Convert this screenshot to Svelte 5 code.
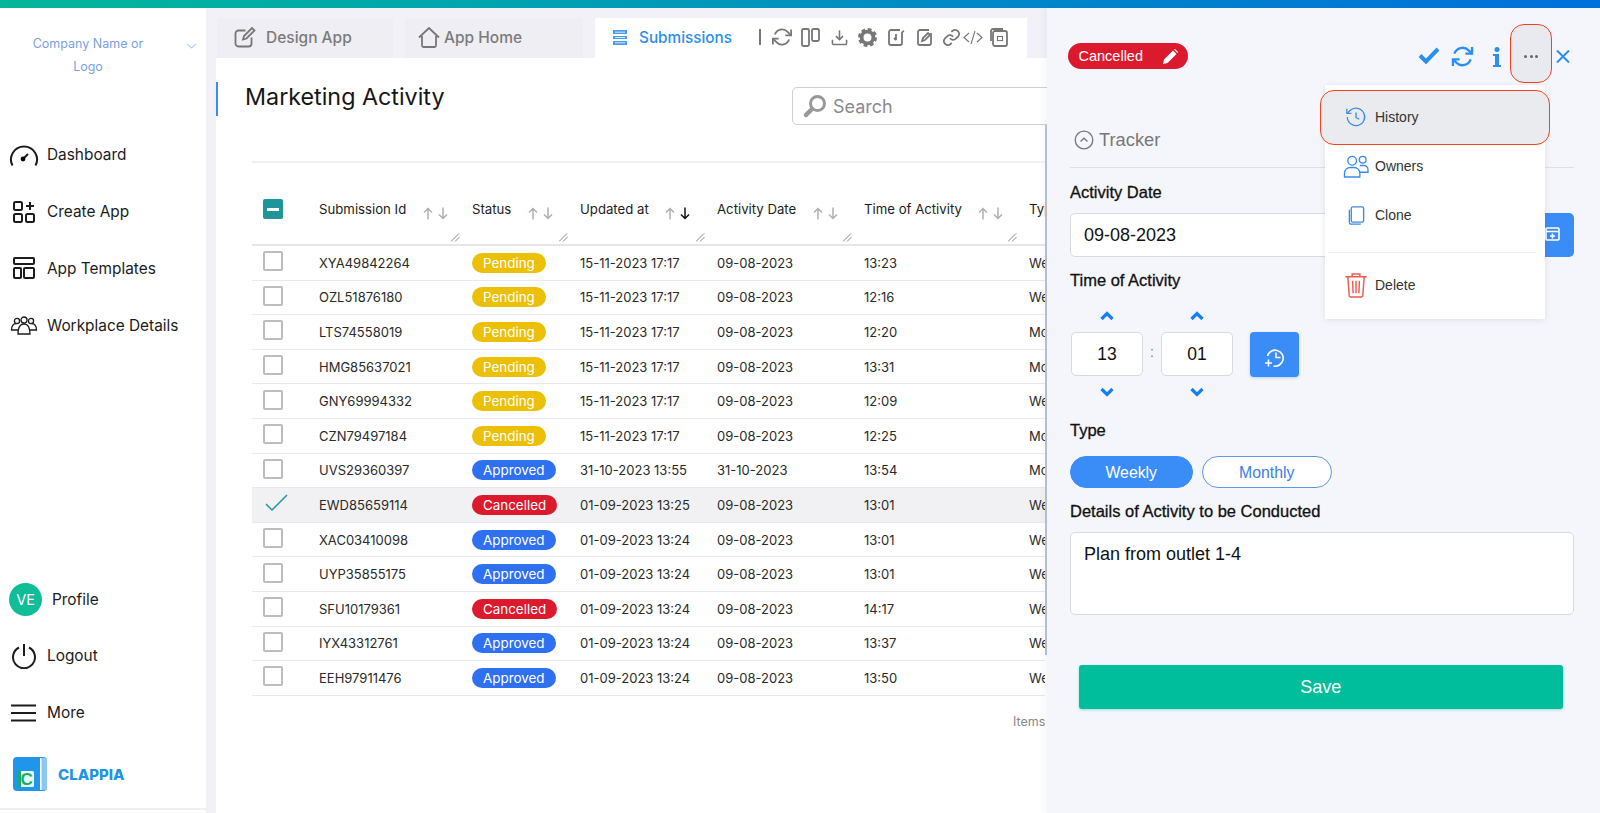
<script>
  const rows = [
    ['XYA49842264', 'Pending', '15-11-2023 17:17', '09-08-2023', '13:23', 'Weekly'],
    ['OZL51876180', 'Pending', '15-11-2023 17:17', '09-08-2023', '12:16', 'Weekly'],
    ['LTS74558019', 'Pending', '15-11-2023 17:17', '09-08-2023', '12:20', 'Monthly'],
    ['HMG85637021', 'Pending', '15-11-2023 17:17', '09-08-2023', '13:31', 'Monthly'],
    ['GNY69994332', 'Pending', '15-11-2023 17:17', '09-08-2023', '12:09', 'Weekly'],
    ['CZN79497184', 'Pending', '15-11-2023 17:17', '09-08-2023', '12:25', 'Monthly'],
    ['UVS29360397', 'Approved', '31-10-2023 13:55', '31-10-2023', '13:54', 'Monthly'],
    ['EWD85659114', 'Cancelled', '01-09-2023 13:25', '09-08-2023', '13:01', 'Weekly'],
    ['XAC03410098', 'Approved', '01-09-2023 13:24', '09-08-2023', '13:01', 'Weekly'],
    ['UYP35855175', 'Approved', '01-09-2023 13:24', '09-08-2023', '13:01', 'Weekly'],
    ['SFU10179361', 'Cancelled', '01-09-2023 13:24', '09-08-2023', '14:17', 'Weekly'],
    ['IYX43312761', 'Approved', '01-09-2023 13:24', '09-08-2023', '13:37', 'Weekly'],
    ['EEH97911476', 'Approved', '01-09-2023 13:24', '09-08-2023', '13:50', 'Weekly']
  ];
  const heads = [
    { label: 'Submission Id' },
    { label: 'Status' },
    { label: 'Updated at', active: true },
    { label: 'Activity Date' },
    { label: 'Time of Activity' }
  ];
</script>

<div class="page">
  <div class="topbar"></div>
  <div class="shell">
    <aside class="sidebar">
      <div class="company">
        <div class="company-name">Company Name or<br />Logo</div>
        <svg class="co-chev" viewBox="0 0 12 7"><path d="M1 1l5 5 5-5" /></svg>
      </div>
      <nav class="nav">
        <div class="nav-item">
          <span class="nav-ic"><svg width="30" height="24" viewBox="0 0 30 24"><path class="ln" d="M3.5 22.5A13 13 0 1 1 26.500 22.500" /><path class="ln" d="M14 16l5-5" /><circle cx="14" cy="16" r="2.400" /></svg></span>
          <span>Dashboard</span>
        </div>
        <div class="nav-item">
          <span class="nav-ic"><svg width="22" height="22" viewBox="0 0 22 22"><rect class="ln" x="1" y="1" width="8" height="8" rx="1.500" /><rect class="ln" x="1" y="13" width="8" height="8" rx="1.500" /><rect class="ln" x="13" y="13" width="8" height="8" rx="1.500" /><path class="ln" d="M17 1v8M13 5h8" /></svg></span>
          <span>Create App</span>
        </div>
        <div class="nav-item">
          <span class="nav-ic"><svg width="22" height="22" viewBox="0 0 22 22"><rect class="ln" x="1" y="1" width="20" height="6" rx="1" /><rect class="ln" x="1" y="11" width="7" height="10" rx="1" /><rect class="ln" x="11" y="11" width="10" height="10" rx="1" /></svg></span>
          <span>App Templates</span>
        </div>
        <div class="nav-item">
          <span class="nav-ic"><svg width="28" height="20" viewBox="0 0 28 20"><circle class="ln thin" cx="14" cy="5" r="3" /><circle class="ln thin" cx="7" cy="6" r="2.600" /><circle class="ln thin" cx="21" cy="6" r="2.600" /><path class="ln thin" d="M8 19c0-8 3-10 6-10s6 2 6 10z" /><path class="ln thin" d="M8 15H1.500c0-4 2-6.500 5-6.500M20 15h6.500c0-4-2-6.500-5-6.500" /></svg></span>
          <span>Workplace Details</span>
        </div>
      </nav>
      <div class="nav lower">
        <div class="nav-item profile">
          <span class="avatar">VE</span>
          <span>Profile</span>
        </div>
        <div class="nav-item">
          <span class="nav-ic"><svg width="26" height="26" viewBox="0 0 26 26"><path class="ln" d="M8 4.500a11 11 0 1 0 10 0M13 1v12" /></svg></span>
          <span>Logout</span>
        </div>
        <div class="nav-item">
          <span class="nav-ic"><svg width="26" height="18" viewBox="0 0 26 18"><path class="ln" d="M0 1.500h25M0 9h25M0 16.500h25" /></svg></span>
          <span>More</span>
        </div>
      </div>
      <div class="brand">
        <svg width="35" height="34" viewBox="0 0 35 34">
          <rect width="34" height="34" rx="4" fill="#1f96ec" />
          <rect x="27" y="1" width="7" height="32" fill="#8cc6f4" />
          <rect x="27" y="1" width="1.500" height="32" fill="#fff" />
          <rect x="5" y="14" width="16" height="16" rx="1.500" fill="#e8f6ef" />
          <rect x="5" y="14" width="3" height="16" fill="#19ab70" />
          <text x="7.500" y="27.500" class="logo-c">C</text>
        </svg>
        <span class="brand-name">CLAPPIA</span>
      </div>
    </aside>

    <main class="main">
      <div class="tabs">
        <div class="tab design">
          <svg width="22" height="22" viewBox="0 0 22 22"><path class="gl" d="M17.500 11.500v6a3 3 0 0 1-3 3h-10a3 3 0 0 1-3-3v-10a3 3 0 0 1 3-3h7" /><path class="gl" d="M9 13.500l1-3.500 8-8 2.500 2.500-8 8z" /></svg>
          <span>Design App</span>
        </div>
        <div class="tab home">
          <svg width="22" height="21" viewBox="0 0 22 21"><path class="gl" d="M1 10.500L11 1l10 9.500M4 9v9.500a1.500 1.500 0 0 0 1.500 1.500h11a1.500 1.500 0 0 0 1.500-1.500V9" /></svg>
          <span>App Home</span>
        </div>
        <div class="tab subs">
          <svg width="14" height="15" viewBox="0 0 14 15"><rect width="14" height="15" fill="#4a9bf0" /><path d="M0 4.500h14M0 5.500h14M0 9.500h14M0 10.500h14" stroke="#fff" /><path d="M2 2.200h10M2 7.500h10M2 12.800h10" stroke="#d7e9fc" /></svg>
          <span class="subs-label">Submissions</span>
          <span class="sep"></span>
          <div class="tools">
            <svg width="20" height="20" viewBox="0 0 24 24"><polyline class="gt" points="23 3 23 10 16 10" /><polyline class="gt" points="1 21 1 14 8 14" /><path class="gt" d="M3.500 9a9 9 0 0 1 14.900-3.400L23 10M1 14l4.600 4.400A9 9 0 0 0 20.500 15" /></svg>
            <svg width="19" height="19" viewBox="0 0 19 19"><rect class="gl" x="1" y="1" width="7" height="17" rx="1.500" /><rect class="gl" x="11" y="1" width="7" height="12" rx="1.500" /></svg>
            <svg width="17" height="17" viewBox="0 0 24 24"><path class="gt" d="M22 15v5a2 2 0 0 1-2 2H4a2 2 0 0 1-2-2v-5" /><polyline class="gt" points="7 10 12 15 17 10" /><line class="gt" x1="12" y1="15" x2="12" y2="2" /></svg>
            <svg width="19" height="19" viewBox="0 0 20 20"><circle cx="10" cy="10" r="6.200" fill="none" stroke="#777" stroke-width="4" /><circle cx="10" cy="10" r="8.600" fill="none" stroke="#777" stroke-width="2.800" stroke-dasharray="4 2.750" /></svg>
            <svg width="17" height="17" viewBox="0 0 17 17"><path class="gl" d="M12 1H3a2 2 0 0 0-2 2v11a2 2 0 0 0 2 2h9a2 2 0 0 0 2-2V3" /><path class="gl" d="M8 5v6M6 9l2 2M16 2l-2 1" /></svg>
            <svg width="17" height="17" viewBox="0 0 17 17"><path class="gl" d="M12 1H3a2 2 0 0 0-2 2v11a2 2 0 0 0 2 2h9a2 2 0 0 0 2-2V4" /><path class="gl" d="M5 12l1-3 5-5 2 2-5 5z" /></svg>
            <svg width="19" height="19" viewBox="0 0 24 24"><path class="gt" d="M10 13a5 5 0 0 0 7.500.5l3-3a5 5 0 0 0-7-7L11.800 5" /><path class="gt" d="M14 11a5 5 0 0 0-7.500-.5l-3 3a5 5 0 0 0 7 7l1.700-1.700" /></svg>
            <svg width="20" height="15" viewBox="0 0 20 15"><path class="gl thin" d="M6 3L1 7.500 6 12M14 3l5 4.500L14 12M12 1L8 14" /></svg>
            <svg width="18" height="19" viewBox="0 0 18 19"><rect class="gl" x="3" y="3" width="14" height="15" rx="2" /><path class="gl" d="M1 13V3a2 2 0 0 1 2-2h10" /><rect class="gl thin" x="7.500" y="8.500" width="5" height="4" /></svg>
          </div>
        </div>
      </div>

      <section class="panel">
        <div class="titlerow">
          <h1>Marketing Activity</h1>
          <div class="search">
            <svg width="24" height="24" viewBox="0 0 24 24"><circle cx="14.500" cy="9.500" r="7" fill="none" stroke="#999" stroke-width="3" /><path d="M9 15l-6 6" stroke="#999" stroke-width="4.500" stroke-linecap="round" /></svg>
            <span>Search</span>
          </div>
        </div>

        <div class="tablewrap">
          <div class="grid head">
            <div class="cell-check"><span class="cb-head"></span></div>
            {#each heads as h}
              <div class="hcell">
                <span>{h.label}</span>
                <svg class="sort" width="26" height="13" viewBox="0 0 26 13">
                  <path d="M5 12.500V1.500M1 5.500l4-4 4 4" fill="none" stroke="#b0b0b0" stroke-width="1.500" />
                  <path d="M20 .5V11.500M16 7.500l4 4 4-4" fill="none" stroke={h.active ? '#111' : '#b0b0b0'} stroke-width="1.500" />
                </svg>
                <svg class="grip" width="9" height="9" viewBox="0 0 9 9"><path d="M0 8.500L8 .5M4 8.500L8.500 4" fill="none" stroke="#666" stroke-width=".8" /></svg>
              </div>
            {/each}
            <div class="hcell clip"><span>Type</span></div>
          </div>
          {#each rows as r}
            <div class="grid row" class:selected={r[0] === 'EWD85659114'}>
              <div class="cell-check">
                {#if r[0] === 'EWD85659114'}
                  <svg class="tick" width="23" height="18" viewBox="0 0 23 18"><path d="M1 10l6 6L22 1" fill="none" stroke="#1e9a9a" stroke-width="1.500" /></svg>
                {:else}
                  <span class="cb"></span>
                {/if}
              </div>
              <div>{r[0]}</div>
              <div><span class="pill {r[1].toLowerCase()}">{r[1]}</span></div>
              <div>{r[2]}</div>
              <div>{r[3]}</div>
              <div>{r[4]}</div>
              <div class="clip">{r[5]}</div>
            </div>
          {/each}
          <div class="pager">Items per page</div>
        </div>
      </section>
    </main>
  </div>

  <div class="scrollbar"></div>

  <aside class="drawer">
    <header class="dhead">
      <div class="status">
        <span>Cancelled</span>
        <svg width="15" height="15" viewBox="0 0 15 15"><path d="M0 15l1-4.500L10 1.500 13.500 5 4.500 14z M11 .5l1-.5 3 3-.5 1z" fill="#fff" /></svg>
      </div>
      <div class="dactions">
        <svg class="a-check" width="22" height="17" viewBox="0 0 22 17"><path d="M2 8.500l6 6L20 2" fill="none" stroke="#2b8ff0" stroke-width="4" /></svg>
        <svg class="a-ref" width="23" height="23" viewBox="0 0 24 24"><polyline class="bt" points="22 2 22 9 15 9" /><polyline class="bt" points="2 22 2 15 9 15" /><path class="bt" d="M3.500 9a9 9 0 0 1 14.900-3.400L22 9M2 15l3.600 3.400A9 9 0 0 0 20.500 15" /></svg>
        <svg class="a-info" width="8" height="20" viewBox="0 0 8 20"><circle cx="4" cy="2.500" r="2.500" fill="#2b8ff0" /><path d="M0 7h6v11h2v2H0v-2h2V9H0z" fill="#2b8ff0" /></svg>
        <div class="dots"><i></i><i></i><i></i></div>
        <svg class="a-x" width="14" height="13" viewBox="0 0 14 13"><path d="M1 .5l12 12M13 .5L1 12.500" stroke="#2b8ff0" stroke-width="2" /></svg>
      </div>
    </header>

    <div class="tracker">
      <svg width="20" height="20" viewBox="0 0 20 20"><circle cx="10" cy="10" r="8.800" fill="none" stroke="#777" stroke-width="1.300" /><path d="M6.500 11.500L10 8.200l3.500 3.300" fill="none" stroke="#777" stroke-width="1.300" /></svg>
      <span>Tracker</span>
    </div>

    <div class="label first">Activity Date</div>
    <div class="daterow">
      <div class="field date">09-08-2023</div>
      <button class="cal">
        <svg width="15" height="15" viewBox="0 0 15 15"><rect x="1" y="2" width="13" height="12" rx="1" fill="none" stroke="#fff" stroke-width="1.600" /><path d="M1 5.500h13M5 10h5M7.500 7.500v5" stroke="#fff" stroke-width="1.600" /></svg>
      </button>
    </div>

    <div class="label time">Time of Activity</div>
    <div class="timerow">
      <div class="stepper">
        <svg class="chev" width="14" height="10" viewBox="0 0 14 10"><path d="M1.500 8L7 2.500 12.500 8" /></svg>
        <div class="field tval">13</div>
        <svg class="chev" width="14" height="10" viewBox="0 0 14 10"><path d="M1.500 2L7 7.500 12.500 2" /></svg>
      </div>
      <span class="colon">:</span>
      <div class="stepper">
        <svg class="chev" width="14" height="10" viewBox="0 0 14 10"><path d="M1.500 8L7 2.500 12.500 8" /></svg>
        <div class="field tval">01</div>
        <svg class="chev" width="14" height="10" viewBox="0 0 14 10"><path d="M1.500 2L7 7.500 12.500 2" /></svg>
      </div>
      <button class="clockbtn">
        <svg width="20" height="20" viewBox="0 0 20 20"><path d="M2.500 9a8 8 0 1 1 6 10M11 5.500V10.500h4.500M0 16h7M3.500 12.500v7" fill="none" stroke="#fff" stroke-width="1.600" /></svg>
      </button>
    </div>

    <div class="label type">Type</div>
    <div class="choices">
      <span class="choice on">Weekly</span>
      <span class="choice">Monthly</span>
    </div>

    <div class="label details">Details of Activity to be Conducted</div>
    <div class="field area">Plan from outlet 1-4</div>

    <button class="save">Save</button>

    <div class="menu">
      <div class="mitem active">
        <span class="mic"><svg width="24" height="22" viewBox="0 0 24 24"><path class="bl" d="M2.500 12a9.500 9.500 0 1 0 3-7L2.500 8" /><path class="bl" d="M2 3v5h5M12 7v5.500l3.500 2" /></svg></span>
        <span>History</span>
      </div>
      <div class="mitem owners">
        <span class="mic"><svg width="26" height="23" viewBox="0 0 26 24"><circle class="bl" cx="9" cy="6" r="4.500" /><circle class="bl" cx="20" cy="5" r="3.500" /><path class="bl" d="M1 23v-4a6 6 0 0 1 6-6h4a6 6 0 0 1 6 6v4zM17 11h4a4 4 0 0 1 4.500 4v3H17" /></svg></span>
        <span>Owners</span>
      </div>
      <div class="mitem clone">
        <span class="mic"><svg width="17" height="19" viewBox="0 0 17 20"><rect class="bl" x="3" y="1" width="13" height="16" rx="1.500" /><path class="bl" d="M1 4v13a2 2 0 0 0 2 2h10" /></svg></span>
        <span>Clone</span>
      </div>
      <div class="mdiv"></div>
      <div class="mitem del">
        <span class="mic"><svg width="24" height="26" viewBox="0 0 24 27"><path class="rl" d="M1 5h22M8 5V2h8v3M3.500 5l1.500 20a1.500 1.500 0 0 0 1.500 1h11a1.500 1.500 0 0 0 1.500-1l1.500-20M8.500 9l.5 13M12 9v13M15.500 9l-.5 13" /></svg></span>
        <span>Delete</span>
      </div>
    </div>
  </aside>
</div>

<style>
  :global(body) {
    margin: 0;
    background: #fff;
  }
  .page {
    position: relative;
    display: flex;
    flex-direction: column;
    width: 1600px;
    height: 813px;
    overflow: hidden;
    font-family: Inter, "Liberation Sans", sans-serif;
    color: #1f1f1f;
  }
  .topbar {
    flex: 0 0 8px;
    background: linear-gradient(90deg, #05b699 0%, #00a5ae 30%, #0089c6 60%, #0070dc 100%);
  }
  .shell {
    flex: 1;
    display: flex;
    min-height: 0;
    background: #f1f1f7;
  }
  .ln {
    fill: none;
    stroke: #1c1c1c;
    stroke-width: 2;
  }
  .ln.thin { stroke-width: 1.300; }
  .gl {
    fill: none;
    stroke: #777;
    stroke-width: 1.800;
  }
  .gl.thin { stroke-width: 1.100; }
  .gt {
    fill: none;
    stroke: #777;
    stroke-width: 2.200;
  }
  .bt {
    fill: none;
    stroke: #2b8ff0;
    stroke-width: 2.400;
  }
  .bl {
    fill: none;
    stroke: #3a8be8;
    stroke-width: 1.400;
  }
  .rl {
    fill: none;
    stroke: #ee5a4d;
    stroke-width: 1.500;
  }

  .sidebar {
    flex: 0 0 206px;
    display: flex;
    flex-direction: column;
    background: #fff;
  }
  .company {
    display: flex;
    padding-top: 24px;
  }
  .company-name {
    flex: 0 0 176px;
    text-align: center;
    font-size: 12.500px;
    line-height: 23px;
    color: #7b9fe4;
  }
  .co-chev {
    width: 11px;
    height: 6px;
    margin: 11px 0 0 10px;
    fill: none;
    stroke: #7b9fe4;
    stroke-width: 1;
  }
  .nav {
    margin-top: 48.500px;
    display: flex;
    flex-direction: column;
  }
  .nav.lower { margin-top: auto; }
  .nav-item {
    height: 56.800px;
    display: flex;
    align-items: center;
    gap: 8px;
    padding-left: 8px;
    font-size: 15.400px;
    color: #1c1c1c;
  }
  .nav-ic {
    flex: 0 0 31px;
    display: flex;
    justify-content: center;
  }
  .profile {
    height: 56px;
    padding-left: 9px;
    gap: 10px;
  }
  .avatar {
    flex: 0 0 33px;
    height: 33px;
    border-radius: 50%;
    background: #0fbd99;
    color: #fff;
    display: flex;
    align-items: center;
    justify-content: center;
    font-size: 14.500px;
  }
  .brand {
    display: flex;
    align-items: center;
    gap: 10px;
    padding: 16px 0 17px 13px;
    border-bottom: 2px solid #f0f0f4;
    margin-bottom: 3px;
  }
  .logo-c {
    font: 700 17px "Liberation Sans", sans-serif;
    fill: #19ab70;
  }
  .brand-name {
    font: 800 15px Inter, sans-serif;
    color: #1e94e6;
  }

  .main {
    flex: 1;
    min-width: 0;
    display: flex;
    flex-direction: column;
    padding-left: 10px;
  }
  .tabs {
    flex: 0 0 50px;
    display: flex;
    padding: 10px 0 0 1px;
    gap: 12px;
    box-sizing: border-box;
  }
  .tab {
    display: flex;
    align-items: center;
    box-sizing: border-box;
    padding-bottom: 2px;
    font-size: 15.500px;
    font-weight: 500;
    color: #7b7b7b;
    background: #eeeef3;
  }
  .design {
    width: 176px;
    padding-left: 17px;
    gap: 10px;
  }
  .home {
    width: 178px;
    padding-left: 13px;
    gap: 4px;
  }
  .subs {
    width: 432px;
    padding-left: 18px;
    background: #fff;
  }
  .subs-label {
    margin-left: 12px;
    font-size: 15.300px;
    color: #2b8fe8;
  }
  .sep {
    width: 2px;
    height: 16px;
    margin-left: 27px;
    background: #777;
  }
  .tools {
    display: flex;
    align-items: center;
    margin-left: 11px;
  }
  .tools svg:nth-child(2) { margin-left: 9px; }
  .tools svg:nth-child(3) { margin-left: 11px; }
  .tools svg:nth-child(4) { margin-left: 10px; }
  .tools svg:nth-child(5) { margin-left: 11px; }
  .tools svg:nth-child(6) { margin-left: 12px; }
  .tools svg:nth-child(7) { margin-left: 8px; }
  .tools svg:nth-child(8) { margin-left: 2px; }
  .tools svg:nth-child(9) { margin-left: 7px; }

  .panel {
    flex: 1;
    min-height: 0;
    background: #fff;
    overflow: hidden;
  }
  .titlerow {
    display: flex;
    align-items: flex-start;
    margin-top: 24px;
  }
  h1 {
    flex: 0 0 576px;
    box-sizing: border-box;
    margin: 0;
    height: 34px;
    padding-left: 27px;
    border-left: 2px solid #3b8bf0;
    font-size: 23.300px;
    font-weight: 400;
    line-height: 30px;
    color: #161616;
  }
  .search {
    flex: 0 0 420px;
    box-sizing: border-box;
    height: 38px;
    margin-top: 5px;
    display: flex;
    align-items: center;
    gap: 6px;
    padding-left: 10px;
    border: 1px solid #cfcfcf;
    border-radius: 5px;
    font-size: 18px;
    color: #8b8b8b;
  }
  .tablewrap {
    margin: 36px 0 0 36px;
    border-top: 2px solid #f1f1f3;
    width: 793px;
  }
  .grid {
    display: grid;
    grid-template-columns: 67px 153px 108px 137px 147px 165px 16px;
    align-items: center;
    font-size: 13px;
  }
  .clip { overflow: hidden; }
  .head {
    box-sizing: border-box;
    height: 83px;
    align-items: start;
    padding-top: 36px;
    border-bottom: 2px solid #e6e6ea;
    font-size: 13.200px;
  }
  .hcell {
    position: relative;
    display: flex;
    align-items: flex-start;
    gap: 16.500px;
    height: 45px;
    line-height: 20px;
    font-weight: 400;
    color: #1c1c1c;
    white-space: nowrap;
  }
  .sort { margin-top: 8px; flex: none; }
  .grip {
    position: absolute;
    right: 12px;
    bottom: 2px;
  }
  .cell-check { padding-left: 11px; display: flex; }
  .cb-head {
    position: relative;
    box-sizing: border-box;
    width: 20px;
    height: 20px;
    border-radius: 2px;
    background: #1f9499;
  }
  .cb-head::after {
    content: "";
    position: absolute;
    left: 4px;
    right: 4px;
    top: 8.500px;
    height: 3px;
    background: #fff;
  }
  .row {
    box-sizing: border-box;
    height: 34.600px;
    border-bottom: 1px solid #e9e9ed;
    color: #2a2a2a;
    white-space: nowrap;
  }
  .row .cell-check { margin-top: -3px; }
  .selected { background: #f1f1f3; }
  .cb {
    box-sizing: border-box;
    width: 20px;
    height: 20px;
    border: 2px solid #bdbdbd;
    border-radius: 2px;
    background: #fff;
  }
  .tick { margin-left: 2px; }
  .pill {
    display: inline-block;
    height: 20px;
    line-height: 20px;
    padding: 0 11px;
    border-radius: 10px;
    color: #fff;
    font-size: 13.400px;
  }
  .pending { background: #ecc006; }
  .approved { background: #2f70f0; }
  .cancelled { background: #db1b2d; }
  .pager {
    margin-top: 18px;
    padding-left: 761px;
    height: 16px;
    overflow: hidden;
    font-size: 12.500px;
    color: #888;
    white-space: nowrap;
  }

  .scrollbar {
    position: absolute;
    left: 1045px;
    top: 125px;
    width: 2px;
    height: 530px;
    background: #b9c1d2;
  }
  .drawer {
    position: absolute;
    left: 1047px;
    top: 8px;
    right: 0;
    bottom: 0;
    padding: 0 26px 0 23px;
    background: #f5f6fc;
    box-shadow: -4px 0 6px rgba(120, 125, 150, .05);
    font-family: "Liberation Sans", Arimo, sans-serif;
    color: #111;
  }
  .dhead {
    display: flex;
    justify-content: space-between;
    padding-top: 16px;
    height: 59px;
  }
  .status {
    box-sizing: border-box;
    width: 120px;
    height: 26px;
    margin: 19px 0 0 -2.500px;
    padding: 0 10px 0 11px;
    display: flex;
    align-items: center;
    justify-content: space-between;
    border-radius: 13px;
    background: #db1b2d;
    color: #fff;
    font-size: 14.500px;
  }
  .dactions {
    position: relative;
    width: 152px;
    margin-right: 4px;
    height: 59px;
  }
  .dactions > svg { position: absolute; }
  .a-check { left: 0; top: 23px; }
  .a-ref { left: 33px; top: 21px; }
  .a-info { left: 75px; top: 23px; }
  .a-x { left: 138px; top: 26px; }
  .dots {
    position: absolute;
    left: 92px;
    top: 0;
    box-sizing: border-box;
    width: 42px;
    height: 59px;
    display: flex;
    align-items: center;
    justify-content: center;
    gap: 2.500px;
    padding-top: 6px;
    background: #e9eaef;
    border: 1.500px solid #f0431f;
    border-radius: 14px;
  }
  .dots i {
    width: 3px;
    height: 3px;
    border-radius: 50%;
    background: #666;
  }
  .tracker {
    display: flex;
    align-items: center;
    gap: 5px;
    height: 30px;
    margin-top: 42px;
    padding: 0 0 12px 4px;
    border-bottom: 1px solid #dfe0e6;
    color: #777;
    font-size: 18.300px;
  }
  .label {
    margin-top: 14px;
    height: 20px;
    line-height: 20px;
    font-size: 16.500px;
    -webkit-text-stroke: .3px #111;
    white-space: nowrap;
  }
  .label.time { margin-top: 13px; }
  .label.type { margin-top: 23px; }
  .label.details { margin-top: 13px; }
  .field {
    box-sizing: border-box;
    background: #fff;
    border: 1px solid #d9d9df;
    border-radius: 5px;
    font-size: 18px;
  }
  .daterow {
    display: flex;
    align-items: center;
    margin-top: 11px;
  }
  .date {
    flex: 1;
    height: 44px;
    line-height: 42px;
    padding-left: 13px;
  }
  .cal {
    flex: 0 0 54px;
    height: 44px;
    padding: 0 0 0 10px;
    border: 0;
    border-radius: 0 5px 5px 0;
    background: #3a8cf7;
  }
  .timerow {
    display: flex;
    align-items: flex-start;
  }
  .stepper {
    width: 72px;
    display: flex;
    flex-direction: column;
    align-items: center;
    gap: 11px;
    padding-top: 21px;
  }
  .stepper:first-child { margin-left: 1px; }
  .chev {
    fill: none;
    stroke: #1780f0;
    stroke-width: 3.200;
  }
  .tval {
    width: 100%;
    height: 44px;
    line-height: 42px;
    text-align: center;
    font-size: 17.500px;
  }
  .colon {
    width: 18px;
    margin-top: 54px;
    text-align: center;
    font-size: 14px;
    color: #777;
  }
  .clockbtn {
    width: 49px;
    height: 45px;
    margin: 42px 0 0 17px;
    padding: 0;
    border: 0;
    border-radius: 4px;
    background: #3a8cf7;
    box-shadow: 0 1px 3px rgba(58, 140, 247, .35);
  }
  .clockbtn svg { display: block; margin: 5px auto 0; }
  .choices {
    display: flex;
    gap: 9.500px;
    margin-top: 16px;
  }
  .choice {
    box-sizing: border-box;
    width: 129.500px;
    height: 32px;
    line-height: 32px;
    text-align: center;
    border: 1px solid #5f97e2;
    border-radius: 16px;
    background: #fff;
    color: #3a80e0;
    font-size: 15.800px;
  }
  .choice.on {
    width: 122.500px;
    background: #3a8cf7;
    border-color: #3a8cf7;
    color: #fff;
  }
  .area {
    height: 83px;
    margin-top: 11px;
    padding: 10px 13px;
    line-height: 22px;
  }
  .save {
    display: block;
    box-sizing: border-box;
    width: 484.500px;
    height: 44px;
    margin: 50px 0 0 8.500px;
    border: 0;
    border-radius: 3px;
    background: #00bd9b;
    color: #fff;
    font: 18px "Liberation Sans", Arimo, sans-serif;
    box-shadow: 0 1px 3px rgba(0, 189, 155, .4);
  }
  .menu {
    position: absolute;
    left: 278px;
    top: 77px;
    width: 220px;
    height: 234px;
    box-sizing: border-box;
    padding-top: 5px;
    background: #fff;
    box-shadow: 0 1px 6px rgba(60, 65, 90, .12);
    font-size: 14px;
    color: #333;
  }
  .mitem {
    position: relative;
    height: 48px;
    display: flex;
    align-items: center;
    gap: 6px;
    padding-left: 18px;
  }
  .mic {
    flex: 0 0 26px;
    display: flex;
    justify-content: center;
  }
  .mitem.active {
    box-sizing: border-box;
    height: 55px;
    margin: 0 -5px;
    padding: 0 0 2px 22px;
    background: #e9ebef;
    border: 1.500px solid #f0431f;
    border-radius: 14px;
  }
  .mitem.owners { margin-top: -3px; }
  .mitem.clone { margin-top: 1px; }
  .mdiv {
    height: 1px;
    margin: 13px 9px 8px 3px;
    background: #ececf0;
  }
</style>
